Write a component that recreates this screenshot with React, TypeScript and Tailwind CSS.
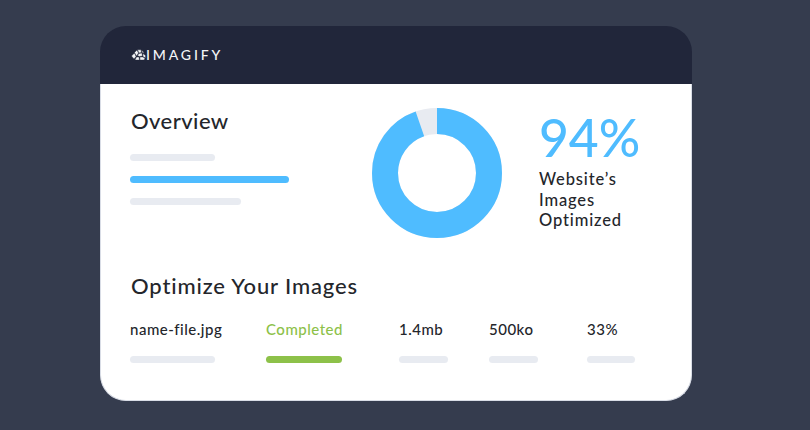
import React from "react";

const font = { fontFamily: 'Lato, sans-serif' };

function Logo() {
  return (
    <svg width="15" height="12" viewBox="0 0 15 12" fill="#f4f5f7" stroke="#21263a" strokeWidth="0.4" className="shrink-0">
      <path d="M0.5 7 L3.5 4 L5 7.5 L3 10 Z" />
      <path d="M3.5 3.5 L6 1 L7.5 4 L5.5 7 Z" />
      <path d="M6.5 0.8 L10 0.8 L10.5 3.5 L8 4 Z" />
      <path d="M8 4.5 L11 4 L11.5 7 L8.5 7.5 L6.5 6.5 Z" />
      <path d="M10.5 1 L13 3.5 L11.5 4 Z" />
      <path d="M12 4.5 L14.5 6.5 L14.5 9 L12 7.5 Z" />
      <path d="M5.5 8 L8 8 L8.5 11 L4 11 Z" />
      <path d="M9 8 L12 8 L14 9.5 L13 11 L9 11 Z" />
    </svg>
  );
}

function Bar({ className }: { className: string }) {
  return <div className={`h-[7px] rounded-full ${className}`} />;
}

function Cell({ w, text, textClass, bar }: { w: string; text: string; textClass: string; bar: string }) {
  return (
    <div className={`flex flex-col ${w}`}>
      <span className={`text-[15px] leading-[20px] whitespace-nowrap tracking-[0.5px] font-medium ${textClass}`}>{text}</span>
      <Bar className={`mt-[17px] ${bar}`} />
    </div>
  );
}

function Donut() {
  const c = 2 * Math.PI * 52;
  return (
    <svg width="130" height="130" viewBox="0 0 130 130" className="shrink-0">
      <circle cx="65" cy="65" r="52" fill="none" stroke="#e8ebf1" strokeWidth="26" />
      <circle
        cx="65"
        cy="65"
        r="52"
        fill="none"
        stroke="#4fbcff"
        strokeWidth="26"
        strokeDasharray={`${c * 0.945} ${c}`}
        transform="rotate(-90 65 65)"
      />
    </svg>
  );
}

export default function App() {
  return (
    <div className="w-[810px] h-[430px] bg-[#353c4e] pt-[26px] pl-[100px] overflow-hidden" style={font}>
      <div className="w-[592px] h-[375px] flex flex-col">
        <div className="h-[58px] rounded-t-[26px] bg-[#21263a] flex items-center pl-[31px] gap-[0px] shrink-0">
          <Logo />
          <span className="text-[14px] font-medium tracking-[2.85px] text-[#f4f5f7] leading-none">IMAGIFY</span>
        </div>
        <div className="flex-1 bg-white rounded-b-[26px] border-b border-x border-[#d9dde6]">
          <div className="flex pl-[29px]">
            <div className="w-[242px] pt-[23px] shrink-0">
              <div className="ml-[1px] text-[22px] leading-[28px] font-medium tracking-[0.45px] text-[#24262b]">Overview</div>
              <div className="flex flex-col mt-[19px]">
                <Bar className="w-[85px] bg-[#e8ebf1]" />
                <Bar className="w-[159px] mt-[15px] bg-[#4fbcff]" />
                <Bar className="w-[111px] mt-[15px] bg-[#e8ebf1]" />
              </div>
            </div>
            <div className="pt-[24px]">
              <Donut />
            </div>
            <div className="pl-[37px] pt-[21px]">
              <div className="text-[51.5px] leading-[64px] font-medium text-[#4fbcff]">94%</div>
              <div className="text-[16.5px] leading-[20.5px] font-medium tracking-[0.85px] text-[#24262b]">
                Website’s
                <br />
                Images
                <br />
                Optimized
              </div>
            </div>
          </div>
          <div className="pl-[29px] pt-[34px]">
            <div className="ml-[1px] text-[22px] leading-[28px] font-medium tracking-[0.85px] text-[#24262b]">Optimize Your Images</div>
            <div className="flex mt-[19px]">
              <div className="w-[135px]">
                <Cell w="w-[85px]" text="name-file.jpg" textClass="text-[#24262b]" bar="bg-[#e8ebf1]" />
              </div>
              <div className="w-[134px]">
                <Cell w="w-[76px] ml-[1px]" text="Completed" textClass="text-[#8dc149]" bar="bg-[#8dc149]" />
              </div>
              <div className="w-[90px]">
                <Cell w="w-[49px]" text="1.4mb" textClass="text-[#24262b]" bar="bg-[#e8ebf1]" />
              </div>
              <div className="w-[98px]">
                <Cell w="w-[49px]" text="500ko" textClass="text-[#24262b]" bar="bg-[#e8ebf1]" />
              </div>
              <Cell w="w-[48px]" text="33%" textClass="text-[#24262b]" bar="bg-[#e8ebf1]" />
            </div>
          </div>
        </div>
      </div>
    </div>
  );
}
